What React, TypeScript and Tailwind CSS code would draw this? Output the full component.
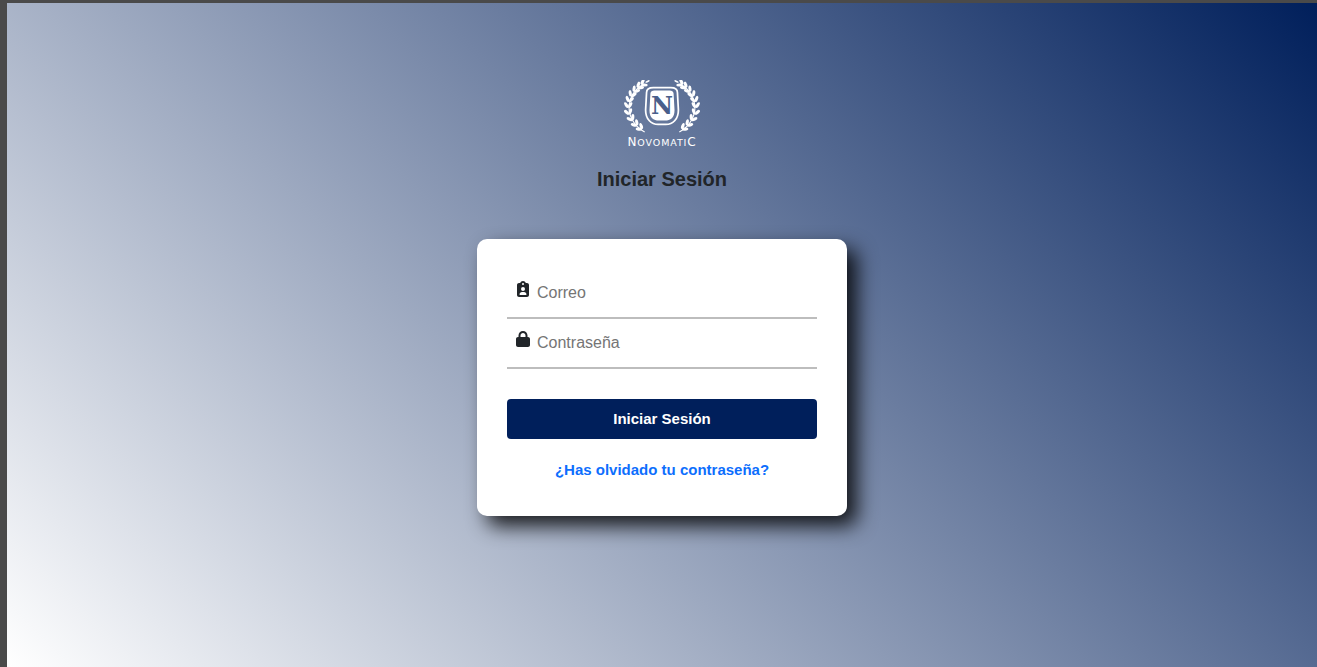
import React from "react";
import { FaClipboardUser, FaLock } from "react-icons/fa6";

const Wreath = ({ flip }: { flip?: boolean }) => {
  // x, y, heading of each leaf pair along the arc
  const leaves = [
    [17, 50, -52],
    [12, 46, -42],
    [7.5, 40.5, -30],
    [4.5, 34, -15],
    [4, 27, 0],
    [5, 21, 12],
    [7.5, 15.5, 24],
    [11, 11, 38],
    [15, 7, 50],
    [19, 4, 60],
  ];
  return (
    <g transform={flip ? "translate(78 0) scale(-1 1)" : undefined}>
      <path d="M21 54C9 47 4 36 5 26C6 17 12 9 20 4" fill="none" stroke="#fff" strokeWidth="1.2" />
      <ellipse cx="24" cy="1.5" rx="2.4" ry="0.9" fill="#fff" transform="rotate(-25 24 1.5)" />
      {leaves.map(([x, y, r], i) => (
        <g key={i} transform={`translate(${x} ${y}) rotate(${r})`}>
          <ellipse cx="-2" cy="-1" rx="1.6" ry="3.3" fill="#fff" transform="rotate(-32 -2 -1)" />
          <ellipse cx="2" cy="-1" rx="1.6" ry="3.3" fill="#fff" transform="rotate(32 2 -1)" />
        </g>
      ))}
    </g>
  );
};

const Logo = () => (
  <div className="flex flex-col items-center h-[70px] w-[78px]">
    <svg width="78" height="56" viewBox="0 0 78 56" className="block">
      <Wreath />
      <Wreath flip />
      <path
        d="M23 13C23 9 26 8 30 8H48C52 8 55 9 55 13L56 31C56 41 50 46 43 46H35C28 46 22 41 22 31Z"
        fill="none"
        stroke="#fff"
        strokeWidth="1.8"
      />
      <path
        d="M27 14C27 12 29 11 31 11H47C49 11 51 12 51 14L52 31C52 39 48 42 42 42H36C30 42 26 39 26 31Z"
        fill="#fff"
      />
      <text
        x="39"
        y="35"
        textAnchor="middle"
        fontFamily="'DejaVu Serif', serif"
        fontWeight="700"
        fontSize="25"
        fill="#4a5f8b"
      >
        N
      </text>
    </svg>
    <div className="mt-[1px] font-['DejaVu_Sans',sans-serif] text-white text-[12px] leading-[14px] tracking-[0.9px] whitespace-nowrap">
      N<span className="text-[9.5px]">OVOMATI</span>C
    </div>
  </div>
);

const Field = ({ icon, label }: { icon: React.ReactNode; label: string }) => (
  <div className="flex items-center h-[50px] border-b-2 border-[#bdbdbd] pl-[9px]">
    <span className="w-[21px] h-[16px] -mt-[8px] text-[#212529] text-[16px] flex items-center -translate-x-px">{icon}</span>
    <span className="text-[16px] text-[#757575] mt-[-1px]">{label}</span>
  </div>
);

export default function App() {
  return (
    <div className="flex flex-col h-[667px] bg-[#4a4a4a] font-['Liberation_Sans',sans-serif] overflow-hidden">
      <div className="h-[3px] shrink-0 bg-[#4a4a4a]" />
      <div className="flex flex-1">
        <div className="w-[7px] shrink-0 bg-[#4a4a4a]" />
        <main className="flex-1 flex flex-col items-center pt-[77px] bg-[linear-gradient(45deg,#ffffff,#001f5b)]">
          <Logo />
          <h1 className="mt-[17px] text-[20px] leading-[24px] font-bold text-[#212529]">Iniciar Sesión</h1>
          <div className="mt-[48px] w-[370px] h-[277px] bg-white rounded-[10px] px-[30px] pt-[30px] shadow-[10px_10px_20px_rgba(0,0,0,0.85)]">
            <Field icon={<FaClipboardUser />} label="Correo" />
            <Field icon={<FaLock />} label="Contraseña" />
            <button className="mt-[30px] w-full h-[40px] rounded-[4px] bg-[#001f5b] text-white text-[15px] font-bold">
              Iniciar Sesión
            </button>
            <div className="mt-[21px] text-center text-[15px] leading-[20px] font-bold text-[#0d6efd]">
              ¿Has olvidado tu contraseña?
            </div>
          </div>
        </main>
      </div>
    </div>
  );
}
